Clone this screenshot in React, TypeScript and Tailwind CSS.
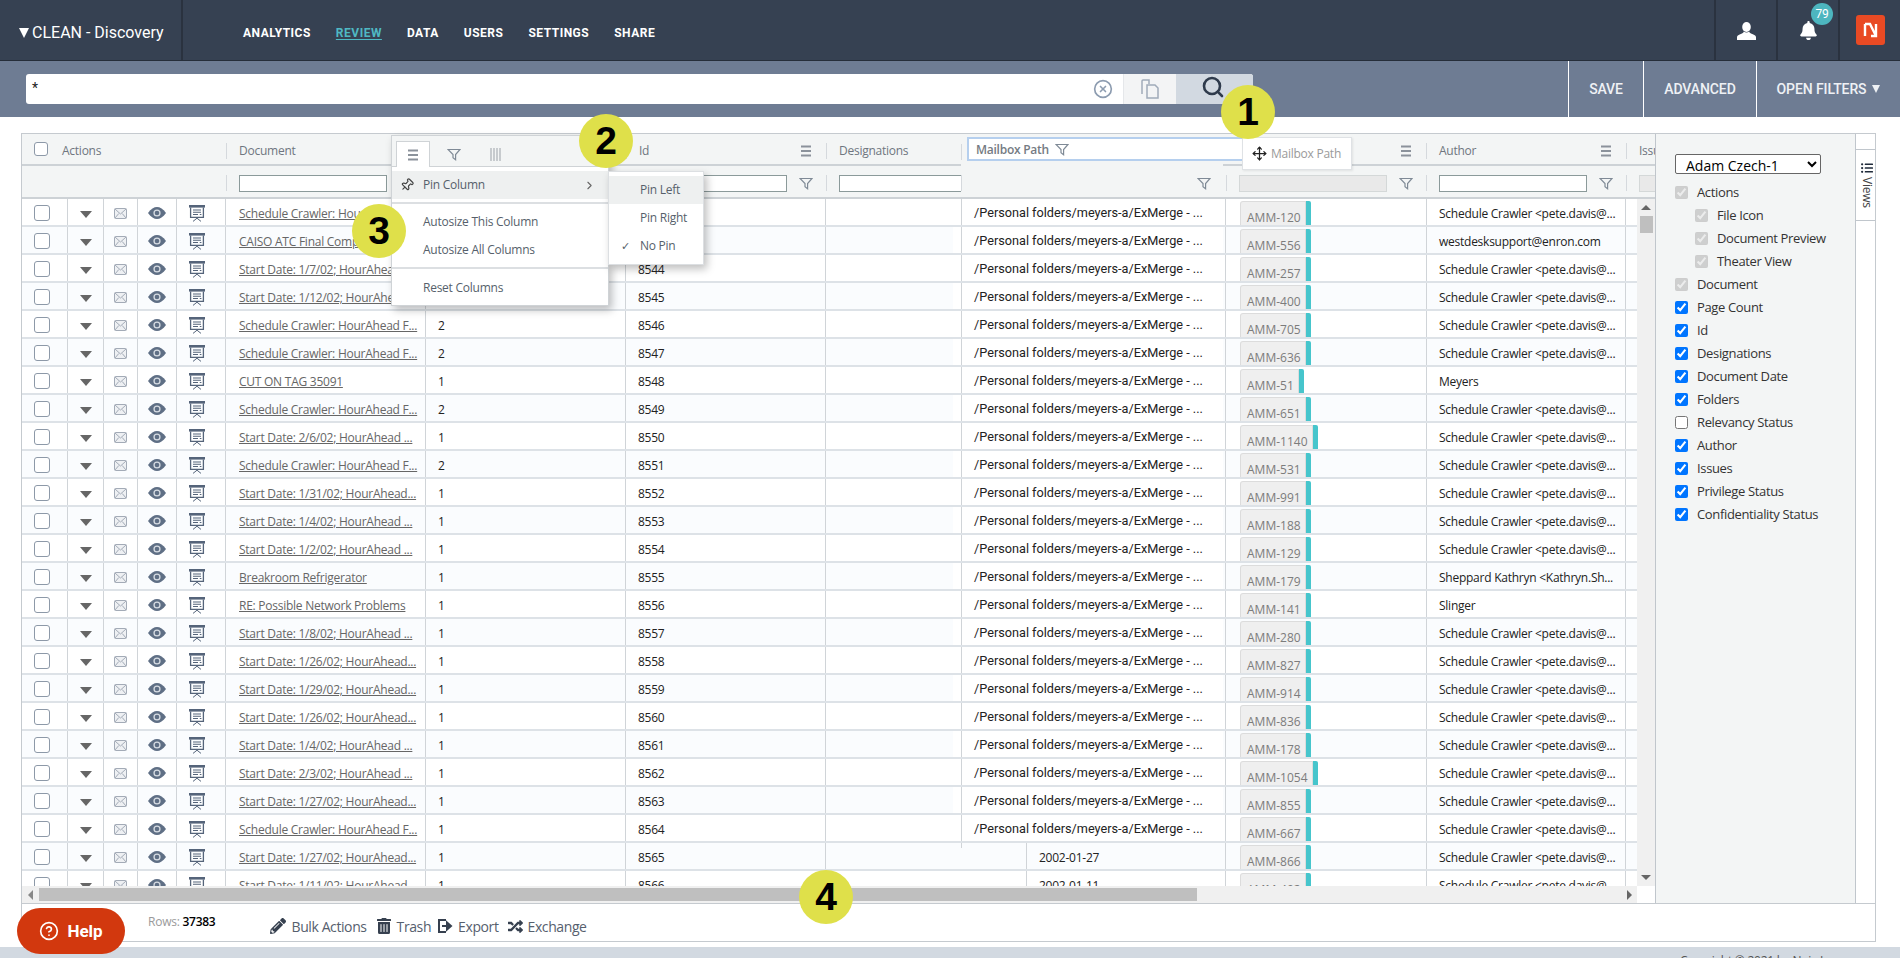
import { ChevronRight, CircleHelp, CircleX, Move, Pin, Search } from "lucide-react";
import { FaBell, FaListUl, FaPencilAlt, FaRandom, FaTrashAlt } from "react-icons/fa";

const schedule = "Schedule Crawler: HourAhead F...";
const docs = [
  schedule,
  "CAISO ATC Final Compliance...",
  "Start Date: 1/7/02; HourAhead...",
  "Start Date: 1/12/02; HourAhead ...",
  schedule,
  schedule,
  "CUT ON TAG 35091",
  schedule,
  "Start Date: 2/6/02; HourAhead ...",
  schedule,
  "Start Date: 1/31/02; HourAhead...",
  "Start Date: 1/4/02; HourAhead ...",
  "Start Date: 1/2/02; HourAhead ...",
  "Breakroom Refrigerator",
  "RE: Possible Network Problems",
  "Start Date: 1/8/02; HourAhead ...",
  "Start Date: 1/26/02; HourAhead...",
  "Start Date: 1/29/02; HourAhead...",
  "Start Date: 1/26/02; HourAhead...",
  "Start Date: 1/4/02; HourAhead ...",
  "Start Date: 2/3/02; HourAhead ...",
  "Start Date: 1/27/02; HourAhead...",
  schedule,
  "Start Date: 1/27/02; HourAhead...",
  "Start Date: 1/11/02; HourAhead...",
];
const tags = [120, 556, 257, 400, 705, 636, 51, 651, 1140, 531, 991, 188, 129, 179, 141, 280, 827, 914, 836, 178, 1054, 855, 667, 866, 402];
const pages = [2, 1, 1, 1, 2, 2, 1, 2, 1, 2];
const crawler = "Schedule Crawler <pete.davis@...";
const authors: Record<number, string> = {
  1: "westdesksupport@enron.com",
  6: "Meyers",
  13: "Sheppard Kathryn <Kathryn.Sh...",
  14: "Slinger",
};
const dates: Record<number, string> = { 23: "2002-01-27", 24: "2002-01-11" };

const views = [
  { label: "Actions", checked: true, disabled: true },
  { label: "File Icon", checked: true, disabled: true, sub: true },
  { label: "Document Preview", checked: true, disabled: true, sub: true },
  { label: "Theater View", checked: true, disabled: true, sub: true },
  { label: "Document", checked: true, disabled: true },
  { label: "Page Count", checked: true },
  { label: "Id", checked: true },
  { label: "Designations", checked: true },
  { label: "Document Date", checked: true },
  { label: "Folders", checked: true },
  { label: "Relevancy Status", checked: false },
  { label: "Author", checked: true },
  { label: "Issues", checked: true },
  { label: "Privilege Status", checked: true },
  { label: "Confidentiality Status", checked: true },
];

function Bars() {
  return (
    <svg width="14" height="12" viewBox="0 0 14 12" className="shrink-0 text-[#8b929b]">
      <path d="M2 1.5h10M2 6h10M2 10.5h10" stroke="currentColor" strokeWidth="2" />
    </svg>
  );
}

function Funnel() {
  return (
    <svg width="14" height="13" viewBox="0 0 14 13" className="shrink-0 text-[#7f8a96]">
      <path d="M1 1.5h12L8.6 6.5v5.2L6 9.8V6.5z" fill="none" stroke="currentColor" strokeWidth="1.2" />
    </svg>
  );
}

function Board() {
  return (
    <svg width="16" height="17" viewBox="0 0 16 17" className="text-[#55647a]">
      <path d="M0 0h16v2.6H0z" fill="currentColor" />
      <path d="M1.6 2.6v9.8h12.8V2.6" fill="none" stroke="currentColor" strokeWidth="1.3" />
      <path d="M4 5h8M4 7.2h8M4 9.5h5M10.8 9.5h1.6" stroke="currentColor" strokeWidth="1.1" />
      <path d="M8 13.2l-4 3.2M8 13.2l4 3.2" stroke="currentColor" strokeWidth="1" fill="none" />
    </svg>
  );
}

function Eye() {
  return (
    <svg width="18" height="12" viewBox="0 0 18 12">
      <path d="M0 6C3 1.8 6 0 9 0s6 1.8 9 6c-3 4.2-6 6-9 6S3 10.2 0 6z" fill="#5f6f85" />
      <circle cx="9" cy="6" r="3.6" fill="#d8dde3" />
      <circle cx="9" cy="6" r="2.3" fill="#5f6f85" />
    </svg>
  );
}

function Envelope() {
  return (
    <svg width="13" height="11" viewBox="0 0 13 11" fill="none" stroke="#a3abb7" strokeWidth="1">
      <rect x="0.5" y="0.5" width="12" height="10" rx="1" fill="#eef0f3" />
      <path d="M1 1l5.5 5L12 1M1 10l3.8-4.5M12 10L8.2 5.5" />
    </svg>
  );
}

function Divider() {
  return <div className="h-[16px] shrink-0 border-l border-[#d5d9dd]" />;
}

function HeadCell({ title, width, menu }: { title: string; width: string; menu?: boolean }) {
  return (
    <div className={`${width} flex shrink-0 items-center`}>
      <Divider />
      <span className="flex-1 truncate pl-[12px] text-[#6f7680]">{title}</span>
      {menu && (
        <span className="pr-[13px]">
          <Bars />
        </span>
      )}
    </div>
  );
}

function FilterCell({ disabled, funnel = true, width }: { disabled?: boolean; funnel?: boolean; width: string }) {
  return (
    <div className={`${width} flex shrink-0 items-center`}>
      <Divider />
      <div
        className={`ml-[12px] h-[17px] w-[148px] shrink-0 border ${
          disabled ? "border-[#d4d8d8] bg-[#e9e9e9]" : "border-[#8b9a9a] bg-white"
        }`}
      />
      {funnel && (
        <span className="ml-[12px]">
          <Funnel />
        </span>
      )}
    </div>
  );
}

function Row({ index }: { index: number }) {
  const tag = tags[index];
  return (
    <div className={`flex h-[28px] shrink-0 border-b-2 border-[#dde2e7] ${index % 2 ? "bg-[#fafcfe]" : "bg-white"}`}>
      <div className="flex w-[46px] shrink-0 items-center border-r border-[#d0d4d8] pl-[12px] pt-[2px]">
        <input type="checkbox" className="h-[16px] w-[16px] appearance-none rounded-[3px] border border-[#8d99a8] bg-white" />
      </div>
      <div className="flex w-[36px] shrink-0 items-center justify-center border-r border-[#d0d4d8] pt-[4px]">
        <span className="h-0 w-0 border-x-[6px] border-t-[7px] border-x-transparent border-t-[#666]" />
      </div>
      <div className="flex w-[34px] shrink-0 items-center justify-center border-r border-[#d0d4d8] pt-[2px]">
        <Envelope />
      </div>
      <div className="flex w-[39px] shrink-0 items-center justify-center border-r border-[#d0d4d8] pt-[2px]">
        <Eye />
      </div>
      <div className="flex w-[49px] shrink-0 items-center justify-start border-r border-[#d0d4d8] pl-[12px] pt-[2px]">
        <Board />
      </div>
      <div className="flex w-[200px] shrink-0 items-center border-r border-[#d0d4d8] pl-[13px] pt-[3px] text-[#666]">
        <span className="underline">{docs[index]}</span>
      </div>
      <div className="flex w-[200px] shrink-0 items-center border-r border-[#d0d4d8] pl-[12px] pt-[3px] text-[#222]">
        {pages[index] ?? 1}
      </div>
      <div className="flex w-[200px] shrink-0 items-center border-r border-[#d0d4d8] pl-[12px] pt-[3px] text-[#222]">{8542 + index}</div>
      <div className="w-[200px] shrink-0" />
      <div className="flex w-[200px] shrink-0 items-center border-x border-[#d0d4d8] pl-[12px] pt-[3px] text-[#222]">{dates[index]}</div>
      <div className="w-[200px] shrink-0 pl-[14px] pt-[2px]">
        <div className="inline-flex h-[24px] overflow-hidden">
          <span className="rounded-tl-[3px] border-x border-t border-[#dcdcdc] bg-[#efefef] pl-[6px] pr-[4px] pt-[8px] leading-[16px] tracking-normal text-[#7c7c7c]">
            AMM-{tag}
          </span>
          <span className="w-[5px] rounded-tr-[2px] bg-[#46c5cc]" />
        </div>
      </div>
      <div className="flex w-[200px] shrink-0 items-center border-x border-[#d0d4d8] pl-[12px] pt-[3px] text-[#222]">
        {authors[index] ?? crawler}
      </div>
    </div>
  );
}

function Marker({ value, place }: { value: number; place: string }) {
  return (
    <div
      className={`${place} absolute z-30 flex h-[54px] w-[54px] items-center justify-center rounded-full bg-[#dfe04a] font-['Liberation_Sans',sans-serif] text-[39px] font-bold text-black`}
    >
      {value}
    </div>
  );
}

export default function App() {
  const rows = docs.map((_, i) => i);
  return (
    <div className="relative flex h-[958px] w-[1900px] flex-col overflow-hidden bg-white font-['Open_Sans',sans-serif] text-[12px] tracking-[-0.25px]">
      {/* top nav */}
      <div className="flex h-[61px] shrink-0 items-center border-b border-[#252d39] bg-[#364152] font-['Roboto',sans-serif] text-white">
        <div className="flex h-full w-[183px] items-center border-r-2 border-[#2a323f] pl-[19px] pt-[5px]">
          <span className="h-0 w-0 border-x-[5px] border-t-[10px] border-x-transparent border-t-white" />
          <span className="ml-[3px] text-[16px] tracking-normal">CLEAN - Discovery</span>
        </div>
        <nav className="ml-[60px] flex gap-[25px] pt-[5px] text-[12px] font-bold tracking-[0.5px]">
          <a>ANALYTICS</a>
          <a className="text-[#4fb9c4] underline underline-offset-2">REVIEW</a>
          <a>DATA</a>
          <a>USERS</a>
          <a>SETTINGS</a>
          <a>SHARE</a>
        </nav>
        <div className="ml-auto flex h-full">
          <div className="flex w-[62px] items-center justify-center border-l-2 border-[#2a323f] pt-[1px]">
            <svg width="19" height="18" viewBox="0 0 19 18" fill="#fff">
              <ellipse cx="9.5" cy="5" rx="4.3" ry="5" />
              <path d="M6.8 9.5c1.5 1.4 3.9 1.4 5.4 0 .3 1 .8 1.6 2.4 2.3 2.5 1 4.4 1.7 4.4 3.5V18H0v-2.7c0-1.800 1.900-2.500 4.400-3.500 1.600-.7 2.100-1.300 2.400-2.300z" />
            </svg>
          </div>
          <div className="relative flex w-[62px] items-center justify-center border-l-2 border-[#2a323f] pt-[1px]">
            <FaBell size={19} />
            <span className="absolute left-[33px] top-[3px] flex h-[22px] w-[22px] items-center justify-center rounded-full bg-[#4db6bf] text-[12px]">
              79
            </span>
          </div>
          <div className="flex w-[62px] items-center justify-center border-l-2 border-[#2a323f]">
            <svg width="29" height="30" viewBox="0 0 29 30">
              <rect x="0" y="0" width="29" height="30" rx="3" fill="#e94a24" />
              <path d="M9 9v12M9 9h5l6 12M20 9v12h-5" fill="none" stroke="#fff" strokeWidth="2.4" />
            </svg>
          </div>
        </div>
      </div>

      {/* search bar */}
      <div className="flex h-[56px] shrink-0 items-center bg-[#6e7c93] font-['Roboto',sans-serif]">
        <div className="ml-[26px] flex h-[30px] w-[1227px] overflow-hidden rounded-[3px] bg-white">
          <div className="flex flex-1 items-center justify-between pl-[6px] pr-[10px] text-[#222]">
            <span className="-mt-[2px] text-[14px]">*</span>
            <CircleX size={20} className="text-[#8d9cb0]" />
          </div>
          <div className="flex w-[53px] items-center justify-center border-l border-[#e5e7ea] bg-[#f3f4f5]">
            <svg width="20" height="22" viewBox="0 0 20 22" fill="none" stroke="#a0abb9" strokeWidth="1.5">
              <path d="M2 16V3a1 1 0 0 1 1-1h6v4" />
              <path d="M7 7h8l3 3v10H7z" />
            </svg>
          </div>
          <div className="flex w-[77px] items-center justify-center bg-[#d2d9e1] pb-[4px] pr-[4px]">
            <Search size={24} strokeWidth={2.6} className="text-[#2f3b4c]" />
          </div>
        </div>
        <div className="ml-auto flex h-full text-[14px] font-medium tracking-[-0.1px] text-[#eef1f5]">
          <div className="flex w-[75px] items-center justify-center border-l border-white">SAVE</div>
          <div className="flex w-[113px] items-center justify-center border-l border-white">ADVANCED</div>
          <div className="flex w-[144px] items-center justify-center gap-[6px] border-l border-white">
            OPEN FILTERS
            <span className="h-0 w-0 border-x-[4px] border-t-[8px] border-x-transparent border-t-[#eef1f5]" />
          </div>
        </div>
      </div>

      {/* grid */}
      <div className="ml-[21px] mt-[16px] flex h-[771px] w-[1855px] shrink-0 border border-[#c5cacf]">
        <div className="flex w-[1633px] shrink-0 flex-col">
          <div className="flex h-[32px] shrink-0 overflow-hidden border-b-2 border-[#cdd2d6] bg-[#f3f5f5] pt-[3px]">
            <div className="flex w-[204px] shrink-0 items-center pl-[12px]">
              <input type="checkbox" className="-mt-[3px] h-[14px] w-[14px] appearance-none rounded-[3px] border border-[#8d99a8] bg-white" />
              <span className="ml-[14px] text-[#6f7680]">Actions</span>
            </div>
            <HeadCell title="Document" width="w-[200px]" menu />
            <HeadCell title="Page Count" width="w-[200px]" menu />
            <HeadCell title="Id" width="w-[200px]" menu />
            <HeadCell title="Designations" width="w-[200px]" />
            <HeadCell title="Document Date" width="w-[200px]" />
            <HeadCell title="Folders" width="w-[200px]" menu />
            <HeadCell title="Author" width="w-[200px]" menu />
            <HeadCell title="Issues" width="w-[200px]" />
          </div>
          <div className="flex h-[33px] shrink-0 overflow-hidden border-b-2 border-[#cdd2d6] bg-[#f3f5f5] pt-[3px]">
            <div className="w-[204px] shrink-0" />
            <FilterCell width="w-[200px]" />
            <FilterCell width="w-[200px]" />
            <FilterCell width="w-[200px]" />
            <FilterCell width="w-[200px]" funnel={false} />
            <FilterCell width="w-[200px]" funnel={false} />
            <FilterCell width="w-[200px]" disabled />
            <FilterCell width="w-[200px]" />
            <FilterCell width="w-[200px]" disabled funnel={false} />
          </div>
          <div className="flex h-[687px] shrink-0">
            <div className="w-[1615px] shrink-0 overflow-hidden">{rows.map((i) => <Row key={i} index={i} />)}</div>
            <div className="flex w-[18px] shrink-0 flex-col items-center bg-[#f0f0f0] pt-[6px]">
              <span className="h-0 w-0 border-x-[5px] border-b-[5px] border-x-transparent border-b-[#666]" />
              <span className="mt-[6px] h-[17px] w-[13px] bg-[#bfbfbf]" />
              <span className="mb-[6px] mt-auto h-0 w-0 border-x-[5px] border-t-[5px] border-x-transparent border-t-[#666]" />
            </div>
          </div>
          <div className="flex h-[17px] shrink-0">
            <div className="flex w-[1615px] shrink-0 items-center bg-[#f0f0f0]">
              <span className="ml-[6px] h-0 w-0 border-y-[5px] border-r-[5px] border-y-transparent border-r-[#888]" />
              <span className="ml-[6px] h-[13px] w-[1158px] bg-[#bfbfbf]" />
              <span className="ml-auto mr-[5px] h-0 w-0 border-y-[5px] border-l-[5px] border-y-transparent border-l-[#666]" />
            </div>
          </div>
        </div>

        {/* views panel */}
        <div className="w-[201px] shrink-0 border-x border-[#c0c6cc] bg-[#f3f5f5] pl-[19px] pt-[20px] text-[13px] tracking-[-0.35px] text-[#333]">
          <select defaultValue="Adam Czech-1" className="block h-[20px] w-[146px] rounded-[2px] border border-[#666] bg-white pl-[6px] text-[14px] tracking-normal text-black">
            <option>Adam Czech-1</option>
          </select>
          <div className="mt-[7px] flex flex-col">
            {views.map((v) => (
              <label key={v.label} className={`flex h-[23px] items-center ${v.sub ? "pl-[20px]" : ""}`}>
                <input type="checkbox" defaultChecked={v.checked} disabled={v.disabled} className="m-0 h-[13px] w-[13px] shrink-0" />
                <span className="ml-[9px] whitespace-nowrap">{v.label}</span>
              </label>
            ))}
          </div>
        </div>
        <div className="flex w-[19px] shrink-0 flex-col">
          <div className="h-[16px] border-b border-[#c0c6cc]" />
          <div className="flex h-[71px] flex-col items-center border-b border-[#c0c6cc] pl-[2px] pt-[12px] text-[12px] text-[#444]">
            <FaListUl size={12} className="text-[#1f2a3a]" />
            <span className="mt-[3px] [writing-mode:vertical-rl]">Views</span>
          </div>
        </div>
      </div>

      {/* footer */}
      <div className="relative ml-[21px] flex h-[38px] w-[1855px] shrink-0 border-x border-b border-[#c5cacf] text-[14px] tracking-[-0.4px] text-[#56606e]">
        <div className="ml-[126px] mt-[9px] text-[12px] tracking-[-0.25px]">
          <span className="text-[#9a9a9a]">Rows: </span>
          <span className="font-semibold text-black">37383</span>
        </div>
        <div className="ml-[55px] mt-[12px] flex h-[20px] items-center">
          <FaPencilAlt size={16} className="text-[#36404f]" />
          <span className="ml-[5px]">Bulk Actions</span>
          <FaTrashAlt size={16} className="ml-[9px] text-[#36404f]" />
          <span className="ml-[5px]">Trash</span>
          <svg width="16" height="16" viewBox="0 0 16 16" fill="none" stroke="#36404f" strokeWidth="2" className="ml-[6px]">
            <path d="M9 2H2v12h7" />
            <path d="M5 8h6M10 4.5L14 8l-4 3.5z" fill="#36404f" />
          </svg>
          <span className="ml-[5px]">Export</span>
          <FaRandom size={15} className="ml-[9px] text-[#36404f]" />
          <span className="ml-[5px]">Exchange</span>
        </div>
      </div>

      <div className="mt-[5px] flex-1 bg-[#d2d9e1] pl-[1680px] pt-[6px] text-[12px] leading-[16px] text-[#555]">Copyright © 2021 by Nuix Inc.</div>

      {/* column being dragged */}
      <div className="absolute left-[953px] top-[134px] z-10 w-[270px] pl-[8px]">
        <div className="flex h-[32px] items-center bg-[#f3f5f5] pt-[3px]">
          <Divider />
        </div>
        <div className="flex h-[33px] items-center justify-end border-b-2 border-[#cdd2d6] bg-[#f3f5f5] pt-[3px]">
          <Divider />
          <span className="ml-auto mr-[12px]">
            <Funnel />
          </span>
        </div>
      </div>
      <div className="absolute left-[953px] top-[199px] z-10 w-[270px]">
        {rows.slice(0, 23).map((i) => (
          <div key={i} className="flex h-[28px] border-b-2 border-[#dde2e7] bg-white">
            <div className="ml-[8px] flex flex-1 items-center border-l border-[#d0d4d8] pl-[12px] pt-[1px] font-['Roboto',sans-serif] text-[12.7px] tracking-normal text-[#222]">
              /Personal folders/meyers-a/ExMerge - ...
            </div>
          </div>
        ))}
        <div className="ml-[8px] h-[5px] border-l border-[#d0d4d8]" />
      </div>
      <div className="absolute left-[967px] top-[137px] z-10 flex h-[24px] w-[277px] items-center border-2 border-[#b5cfee] bg-white pl-[7px] pt-[1px] font-semibold text-[#757b83]">
        Mailbox Path
        <span className="ml-[6px]">
          <Funnel />
        </span>
      </div>
      <div className="absolute left-[1242px] top-[137px] z-10 flex h-[33px] w-[110px] items-center border border-[#dfe2e5] bg-white pl-[9px] text-[#9a9a9a] shadow-[1px_1px_2px_rgba(0,0,0,0.08)]">
        <Move size={15} className="text-[#222]" />
        <span className="ml-[4px]">Mailbox Path</span>
      </div>

      {/* column menu */}
      <div className="absolute left-[391px] top-[135px] z-20 w-[218px] border border-[#cfd3d6] bg-white text-[#565f6b] shadow-[3px_4px_8px_rgba(0,0,0,0.25)]">
        <div className="flex h-[31px] items-end border-b border-[#cfd3d6] bg-[#f3f5f5] pl-[4px]">
          <div className="-mb-px flex h-[26px] w-[34px] items-center justify-center border-x border-t border-[#cfd3d6] bg-white">
            <Bars />
          </div>
          <div className="mb-[5px] ml-[17px]">
            <Funnel />
          </div>
          <svg width="12" height="13" viewBox="0 0 12 13" className="mb-[5px] ml-[29px] text-[#9ba1a8]">
            <path d="M1 0v13M4 0v13M7 0v13M10 0v13" stroke="currentColor" strokeWidth="1" />
          </svg>
        </div>
        <div className="mt-[4px] flex h-[28px] items-center bg-[#eef0f0] pl-[8px] pr-[12px]">
          <Pin size={14} className="rotate-45 text-[#444]" />
          <span className="ml-[9px]">Pin Column</span>
          <ChevronRight size={13} className="ml-auto text-[#666]" />
        </div>
        <div className="mt-[3px] border-t-2 border-[#dcdfe2] pt-[4px]">
          <div className="flex h-[28px] items-center pl-[31px]">Autosize This Column</div>
          <div className="flex h-[28px] items-center pl-[31px]">Autosize All Columns</div>
        </div>
        <div className="mt-[3px] border-t-2 border-[#dcdfe2] pb-[3px] pt-[5px]">
          <div className="flex h-[28px] items-center pl-[31px]">Reset Columns</div>
        </div>
      </div>
      <div className="absolute left-[608px] top-[171px] z-20 w-[96px] border border-[#dcdfe2] bg-white py-[4px] text-[#565f6b] shadow-[3px_4px_8px_rgba(0,0,0,0.25)]">
        <div className="flex h-[28px] items-center bg-[#eef0f0] pl-[31px]">Pin Left</div>
        <div className="flex h-[28px] items-center pl-[31px]">Pin Right</div>
        <div className="relative flex h-[28px] items-center pl-[31px]">
          <span className="absolute left-[12px] text-[11px]">✓</span>
          No Pin
        </div>
      </div>

      <Marker value={1} place="left-[1221px] top-[85px]" />
      <Marker value={2} place="left-[579px] top-[114px]" />
      <Marker value={3} place="left-[352px] top-[204px]" />
      <Marker value={4} place="left-[799px] top-[870px]" />

      {/* help */}
      <div className="absolute left-[17px] top-[908px] z-30 flex h-[46px] w-[108px] items-center justify-center gap-[8px] rounded-[23px] bg-[#d2380e] font-['Roboto',sans-serif] text-[17px] font-bold tracking-normal text-white">
        <CircleHelp size={20} />
        <span className="pt-[2px]">Help</span>
      </div>
    </div>
  );
}
